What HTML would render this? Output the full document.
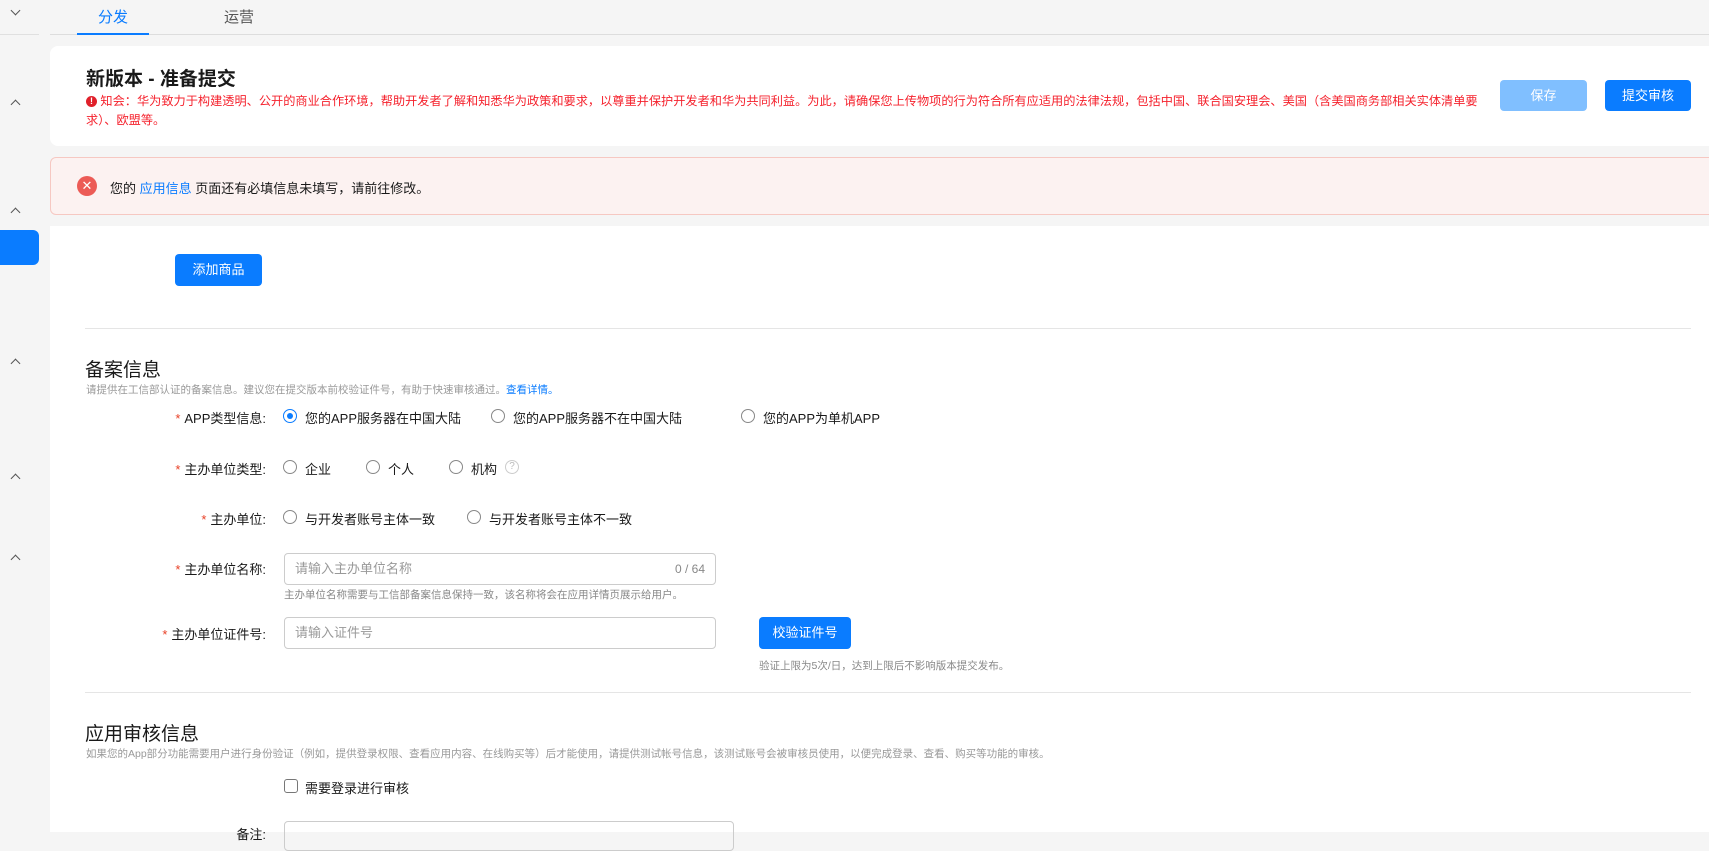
<!DOCTYPE html>
<html><head><meta charset="utf-8"><style>
*{margin:0;padding:0;box-sizing:border-box}
body{width:1709px;height:832px;overflow:hidden;background:#f5f5f5;font-family:"Liberation Sans","Noto Sans CJK SC",sans-serif;color:#191919;position:relative}
.a{position:absolute;white-space:nowrap}
.chev{position:absolute;left:12px;width:7px;height:7px;border-left:1.3px solid #555;border-top:1.3px solid #555;transform:rotate(45deg)}
.lbl{position:absolute;right:1443px;font-size:13px;white-space:nowrap}
.lbl b{color:#e84026;font-weight:normal;margin-right:4px}
.radio{position:absolute;width:14px;height:14px;border:1px solid #888;border-radius:50%}
.radio.on{border-color:#0a7cff}
.radio.on:after{content:"";position:absolute;left:3px;top:3px;width:6px;height:6px;border-radius:50%;background:#0a7cff}
.rt{position:absolute;font-size:13px;white-space:nowrap}
.inp{position:absolute;border:1px solid #ccc;border-radius:4px;background:#fff;font-size:13px;color:#999;padding-left:10px}
.btn{position:absolute;border-radius:4px;color:#fff;font-size:13px;text-align:center}
.hint{position:absolute;font-size:11px;color:#888;white-space:nowrap}
.hr{position:absolute;left:85px;width:1606px;height:1px;background:#e5e5e5}
</style></head><body>
<div class="a" style="left:0;top:34px;width:39px;height:1px;background:#e0e0e0"></div>
<div class="chev" style="top:7px;transform:rotate(225deg)"></div>
<div class="chev" style="top:101px"></div>
<div class="chev" style="top:209px"></div>
<div class="chev" style="top:360px"></div>
<div class="chev" style="top:475px"></div>
<div class="chev" style="top:556px"></div>
<div class="a" style="left:0;top:230px;width:39px;height:35px;background:#0a7cff;border-radius:0 6px 6px 0"></div>
<div class="a" style="left:50px;top:34px;width:1659px;height:1px;background:#ddd"></div>
<div class="a" style="left:98px;top:6px;font-size:15px;color:#0a7cff">分发</div>
<div class="a" style="left:77px;top:33px;width:72px;height:2px;background:#0a7cff"></div>
<div class="a" style="left:224px;top:6px;font-size:15px;color:#555">运营</div>
<div class="a" style="left:50px;top:46px;width:1680px;height:100px;background:#fff;border-radius:8px"></div>
<div class="a" style="left:86px;top:64px;font-size:19px;font-weight:bold">新版本 - 准备提交</div>
<div class="a" style="left:86px;top:92px;font-size:12.2px;color:#f5222d;line-height:19px;white-space:normal;width:1395px"><span style="display:inline-block;width:11px;height:11px;border-radius:50%;background:#e0202a;color:#fff;font-size:9px;text-align:center;line-height:11px;font-weight:bold;vertical-align:1px">!</span> 知会：华为致力于构建透明、公开的商业合作环境，帮助开发者了解和知悉华为政策和要求，以尊重并保护开发者和华为共同利益。为此，请确保您上传物项的行为符合所有应适用的法律法规，包括中国、联合国安理会、美国（含美国商务部相关实体清单要求）、欧盟等。</div>
<div class="btn" style="left:1500px;top:80px;width:87px;height:31px;line-height:31px;background:#80bfff">保存</div>
<div class="btn" style="left:1605px;top:80px;width:86px;height:31px;line-height:31px;background:#0a7cff">提交审核</div>
<div class="a" style="left:50px;top:157px;width:1680px;height:58px;background:#fcf2f1;border:1px solid #f6c8c2;border-radius:6px"></div>
<div class="a" style="left:77px;top:176px;width:20px;height:20px;border-radius:50%;background:#ec5b56;color:#fff;font-size:13px;text-align:center;line-height:20px">✕</div>
<div class="a" style="left:110px;top:178px;font-size:13px">您的 <span style="color:#0a7cff">应用信息</span> 页面还有必填信息未填写，请前往修改。</div>
<div class="a" style="left:50px;top:226px;width:1659px;height:606px;background:#fff"></div>
<div class="btn" style="left:175px;top:254px;width:87px;height:32px;line-height:32px;background:#0a7cff">添加商品</div>
<div class="hr" style="top:328px"></div>
<div class="a" style="left:85px;top:355px;font-size:19px">备案信息</div>
<div class="hint" style="left:86px;top:382px;color:#999;font-size:10.5px">请提供在工信部认证的备案信息。建议您在提交版本前校验证件号，有助于快速审核通过。<span style="color:#0a7cff">查看详情。</span></div>

<div class="lbl" style="top:408px"><b>*</b>APP类型信息:</div>
<div class="radio on" style="left:283px;top:409px"></div><div class="rt" style="left:305px;top:408px">您的APP服务器在中国大陆</div>
<div class="radio" style="left:491px;top:409px"></div><div class="rt" style="left:513px;top:408px">您的APP服务器不在中国大陆</div>
<div class="radio" style="left:741px;top:409px"></div><div class="rt" style="left:763px;top:408px">您的APP为单机APP</div>

<div class="lbl" style="top:459px"><b>*</b>主办单位类型:</div>
<div class="radio" style="left:283px;top:460px"></div><div class="rt" style="left:305px;top:459px">企业</div>
<div class="radio" style="left:366px;top:460px"></div><div class="rt" style="left:388px;top:459px">个人</div>
<div class="radio" style="left:449px;top:460px"></div><div class="rt" style="left:471px;top:459px">机构</div>
<div class="a" style="left:505px;top:460px;width:14px;height:14px;border:1px solid #ccc;border-radius:50%;font-size:10px;color:#bbb;text-align:center;line-height:12px">?</div>

<div class="lbl" style="top:509px"><b>*</b>主办单位:</div>
<div class="radio" style="left:283px;top:510px"></div><div class="rt" style="left:305px;top:509px">与开发者账号主体一致</div>
<div class="radio" style="left:467px;top:510px"></div><div class="rt" style="left:489px;top:509px">与开发者账号主体不一致</div>

<div class="lbl" style="top:559px"><b>*</b>主办单位名称:</div>
<div class="inp" style="left:284px;top:553px;width:432px;height:32px;line-height:30px">请输入主办单位名称<span style="position:absolute;right:10px;font-size:12px;color:#888">0 / 64</span></div>
<div class="hint" style="left:284px;top:587px;font-size:10.5px">主办单位名称需要与工信部备案信息保持一致，该名称将会在应用详情页展示给用户。</div>

<div class="lbl" style="top:624px"><b>*</b>主办单位证件号:</div>
<div class="inp" style="left:284px;top:617px;width:432px;height:32px;line-height:30px">请输入证件号</div>
<div class="btn" style="left:759px;top:617px;width:92px;height:32px;line-height:32px;background:#0a7cff">校验证件号</div>
<div class="hint" style="left:759px;top:658px;font-size:10.5px">验证上限为5次/日，达到上限后不影响版本提交发布。</div>

<div class="hr" style="top:692px"></div>
<div class="a" style="left:85px;top:719px;font-size:19px">应用审核信息</div>
<div class="hint" style="left:86px;top:746px;color:#999;font-size:10.5px">如果您的App部分功能需要用户进行身份验证（例如，提供登录权限、查看应用内容、在线购买等）后才能使用，请提供测试帐号信息，该测试账号会被审核员使用，以便完成登录、查看、购买等功能的审核。</div>
<div class="a" style="left:284px;top:779px;width:14px;height:14px;border:1px solid #777;border-radius:3px"></div>
<div class="rt" style="left:305px;top:778px">需要登录进行审核</div>
<div class="lbl" style="top:824px">备注:</div>
<div class="a" style="left:284px;top:821px;width:450px;height:30px;border:1px solid #ccc;border-radius:4px"></div>
</body></html>
